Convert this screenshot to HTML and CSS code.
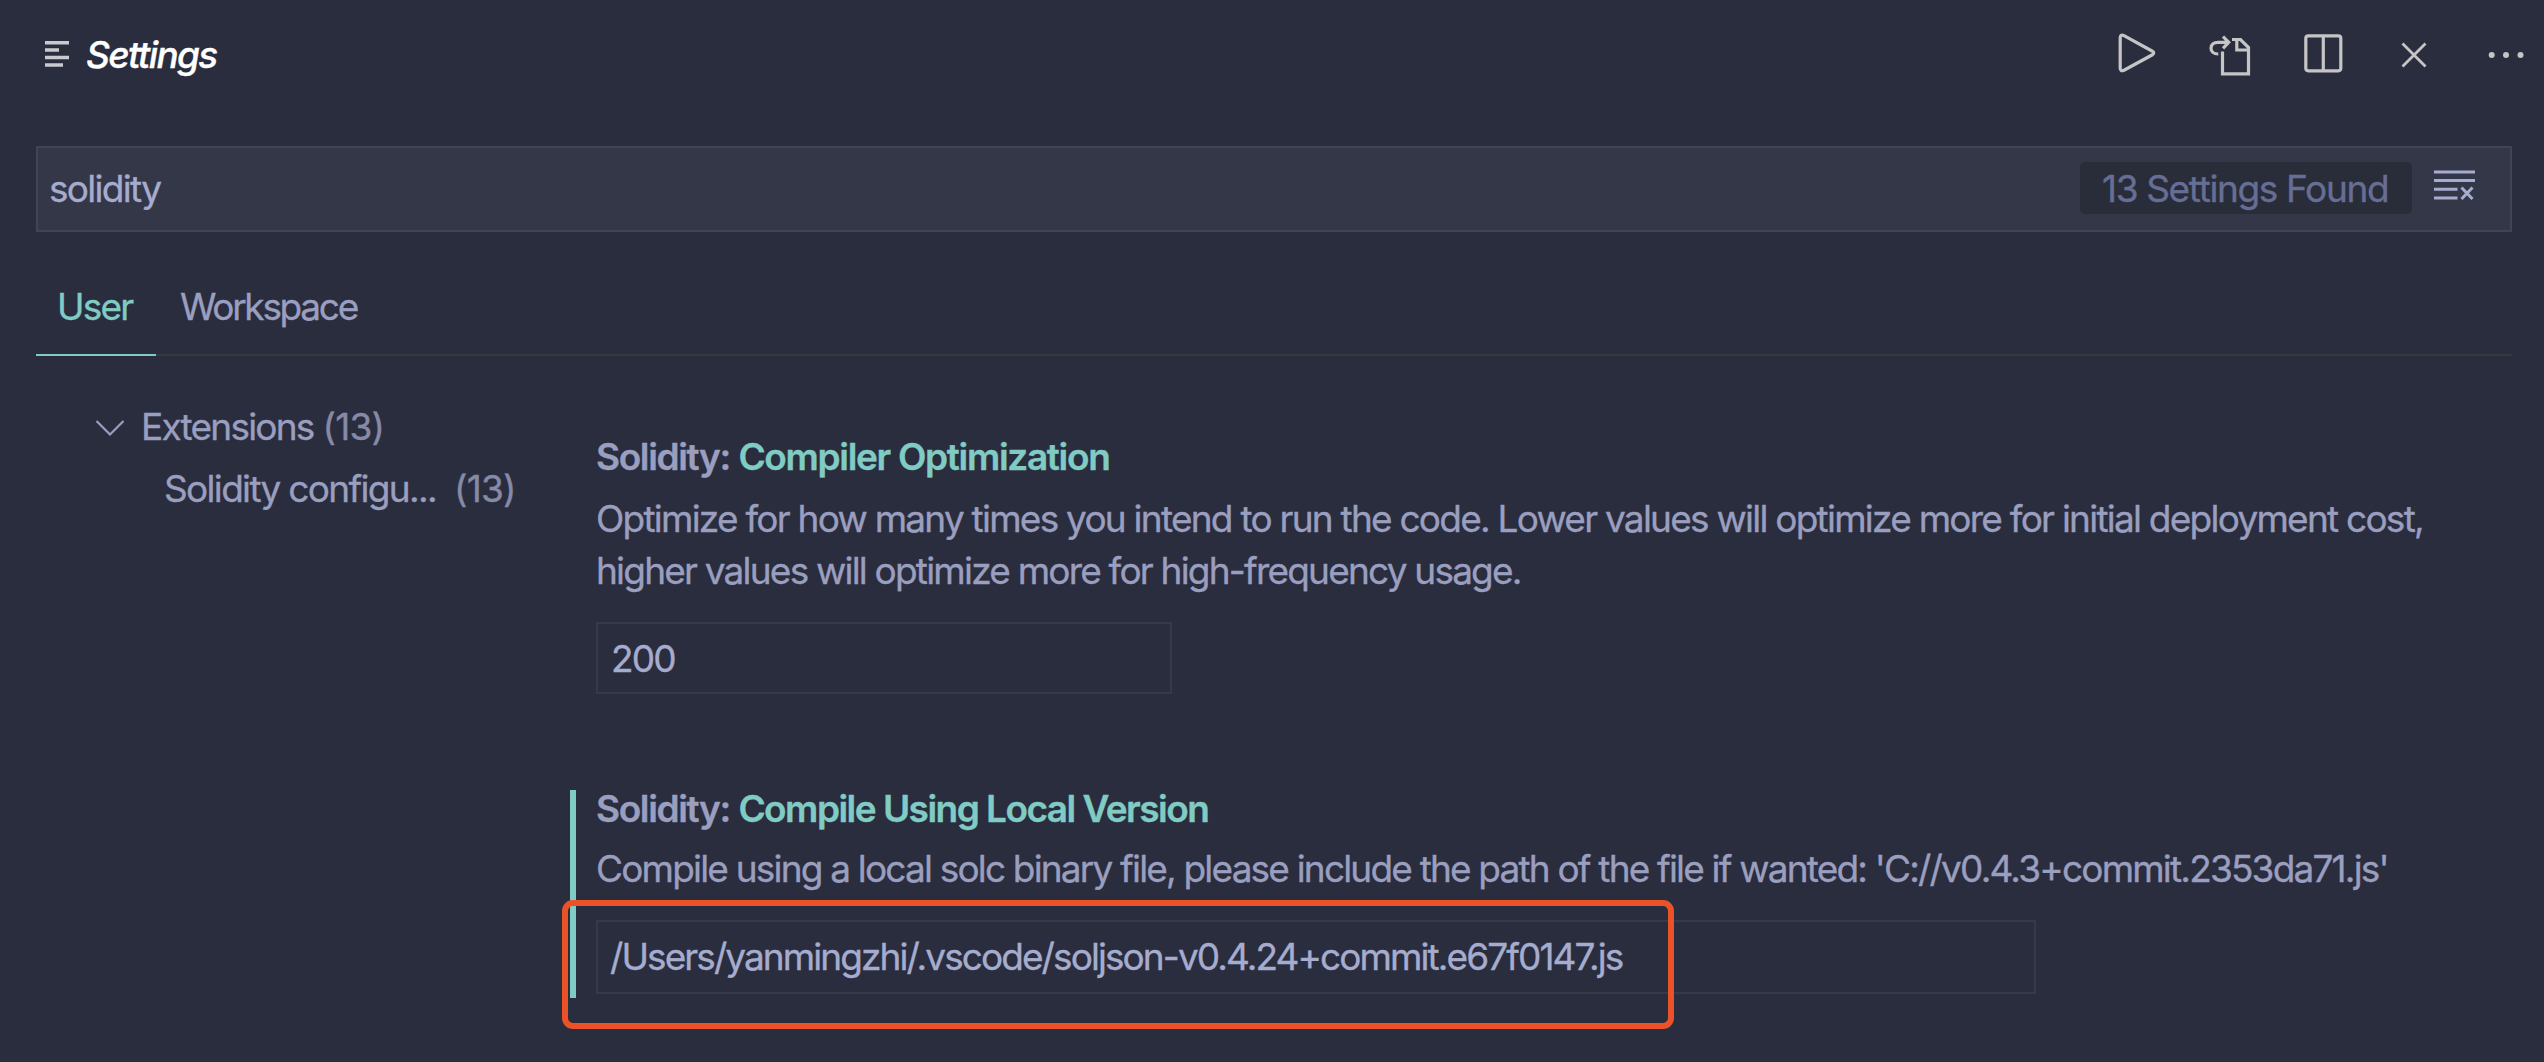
FILE: index.html
```
<!DOCTYPE html>
<html lang="en">
<head>
<meta charset="utf-8">
<title>Settings</title>
<link rel="stylesheet" href="styles.css">
</head>
<body>
<header class="titlebar">
  <svg class="title-icon" width="24" height="26" viewBox="0 0 24 26"><path d="M0 1.8h24M0 9h14M0 16.5h24M0 24h18"/></svg>
  <h1 class="title">Settings</h1>
  <div class="actions">
    <svg class="action" viewBox="0 0 48 48"><path d="M7.2 7Q7.2 2.8 11 4.6L39 20Q42.5 22 39 24L11 39.2Q7.2 41 7.2 37Z"/></svg>
    <svg class="action" viewBox="0 0 48 48"><path d="M12.3 23C7.500 23 5 20.500 5 17.200C5 13.300 8 11.300 12 11.300H22M17 5.500L22.700 11.300L17 17.300M26 8.500H34.500L42.500 16.500V42.800H16.500V20.500M30.800 8.500V19H42.500"/></svg>
    <svg class="action" viewBox="0 0 48 48"><rect x="6.800" y="4.800" width="35" height="35" rx="2.500"/><path d="M24.300 5V40"/></svg>
    <svg class="action action-close" viewBox="0 0 48 48"><path d="M10.500 12.500L33.500 35.500M33.500 12.500L10.500 35.500"/></svg>
    <svg class="action action-more" viewBox="0 0 48 48"><circle cx="6.700" cy="24" r="3"/><circle cx="21" cy="24" r="3"/><circle cx="35.500" cy="24" r="3"/></svg>
  </div>
</header>

<div class="search">
  <span class="search-text">solidity</span>
  <span class="badge">13 Settings Found</span>
  <svg class="clear" width="41" height="31" viewBox="0 0 41 31"><path d="M0 2H41M0 10.500H41M0 19.300H23.500M0 28H23.500M27.500 17.500L38.500 29M38.500 17.500L27.500 29"/></svg>
</div>

<nav class="tabs">
  <span class="tab tab-active">User</span>
  <span class="tab tab-workspace">Workspace</span>
</nav>

<div class="body">
  <aside class="tree">
    <div class="tree-row">
      <svg class="chevron" width="30" height="18" viewBox="0 0 30 18"><path d="M1.500 2L15 15.500L28.500 2"/></svg>
      <span>Extensions</span><span class="count">(13)</span>
    </div>
    <div class="tree-row tree-child"><span>Solidity configu...</span><span class="count">(13)</span></div>
  </aside>
  <main class="settings">
    <section class="setting">
      <div class="marker"></div>
      <div class="setting-main">
        <h2 class="setting-title">Solidity: <span class="setting-name">Compiler Optimization</span></h2>
        <p class="desc"><span class="desc-optimize">Optimize for how many times you intend to run the code. Lower values will optimize more for initial deployment cost,</span><br>higher values will optimize more for high-frequency usage.</p>
        <div class="field field-number">200</div>
      </div>
    </section>
    <section class="setting setting-modified">
      <div class="marker"></div>
      <div class="setting-main">
        <h2 class="setting-title">Solidity: <span class="setting-name name-local">Compile Using Local Version</span></h2>
        <p class="desc">Compile using a local solc binary file, please include the path of the file if wanted: 'C://v0.4.3+commit.2353da71.js'</p>
        <div class="field field-path">/Users/yanmingzhi/.vscode/soljson-v0.4.24+commit.e67f0147.js</div>
      </div>
      <div class="highlight"></div>
    </section>
  </main>
</div>
</body>
</html>
```
FILE: styles.css
```
* { box-sizing: border-box; }

body {
  margin: 0;
  height: 1062px;
  overflow: hidden;
  background: #2a2d3e;
  color: #9a9ebf;
  font: 400 37px/44px Inter, "Liberation Sans", sans-serif;
  letter-spacing: -1.79px;
  white-space: nowrap;
  -webkit-text-stroke: .35px currentColor;
}

h1, h2, p { margin: 0; }
svg { display: block; flex: none; fill: none; }

.titlebar {
  display: flex;
  align-items: center;
  height: 110px;
  padding: 0 11px 0 45px;
}
.title-icon { stroke: #c9cace; stroke-width: 3.6; margin-top: -2px; }
.title {
  margin: 0 0 0 17px;
  color: #fff;
  font-size: 37px;
  font-weight: 500;
  font-style: italic;
  letter-spacing: -1.7px;
}
.actions { display: flex; gap: 45px; margin-left: auto; }
.action { width: 48px; height: 48px; stroke: #c5c5c5; stroke-width: 3.2; }
.action-close { stroke-width: 2.8; }
.action-more { fill: #c5c5c5; stroke: none; }

.search {
  display: flex;
  align-items: center;
  height: 86px;
  margin: 36px 32px 0 36px;
  padding: 0 35px 2px 11px;
  border: 2px solid #414458;
  background: #343748;
}
.search-text { padding-top: 2px; color: #a6accd; letter-spacing: -1.7px; }
.badge {
  width: 332px;
  height: 52px;
  margin-left: auto;
  padding: 5px 0 0 22px;
  border-radius: 5px;
  background: #292d3a;
  color: #676e95;
  letter-spacing: -1.36px;
}
.clear { margin: -6px 0 0 22px; stroke: #a6accd; stroke-width: 3; }

.tabs {
  display: flex;
  margin: 53px 32px 0 36px;
  box-shadow: inset 0 -2px #38393d;
}
.tab { padding-bottom: 25px; border-bottom: 2px solid transparent; }
.tab-active {
  width: 120px;
  padding-left: 21px;
  border-color: #80cbc4;
  color: #80cbc4;
}
.tab-workspace { padding-left: 24px; letter-spacing: -2.3px; }

.body { display: flex; }
.tree { width: 570px; padding: 40px 0 0 95px; line-height: 62px; }
.tree-row { display: flex; align-items: center; }
.tree-row .count { color: #868aa7; letter-spacing: -.8px; margin-left: 9px; }
.chevron { margin: 1px 16px 0 0; stroke: #9a9ebf; stroke-width: 2.2; }
.tree-child { padding-left: 69px; letter-spacing: -1.68px; }
.tree-child .count { margin-left: 18px; }

.settings { flex: 1; padding-top: 75px; line-height: 52px; }
.setting { position: relative; display: flex; }
.setting-modified { margin-top: 89px; height: 215px; }
.marker { width: 6px; margin: 7px 20px 0 0; }
.setting-modified .marker { background: #80cbc4; }
.setting-title { font-size: 37px; font-weight: 600; letter-spacing: -1.36px; }
.setting-name { color: #80cbc4; letter-spacing: -1.32px; margin-left: .5px; }
.name-local { letter-spacing: -1.53px; }
.desc { padding-top: 10px; }
.setting-modified .desc { padding-top: 8px; letter-spacing: -1.81px; }
.desc-optimize { letter-spacing: -1.753px; }
.field {
  height: 72px;
  margin-top: 25px;
  padding: 9px 13px;
  border: 2px solid #363949;
  color: #a6accd;
}
.field-number { width: 576px; }
.field-path { width: 1440px; height: 74px; letter-spacing: -1.92px; padding-left: 12px; }

/* Outline drawn over the edited value */
.highlight {
  position: absolute;
  left: -8px;
  top: 117px;
  width: 1112px;
  height: 129px;
  border: 6px solid #ec5228;
  border-radius: 11px;
}
```
